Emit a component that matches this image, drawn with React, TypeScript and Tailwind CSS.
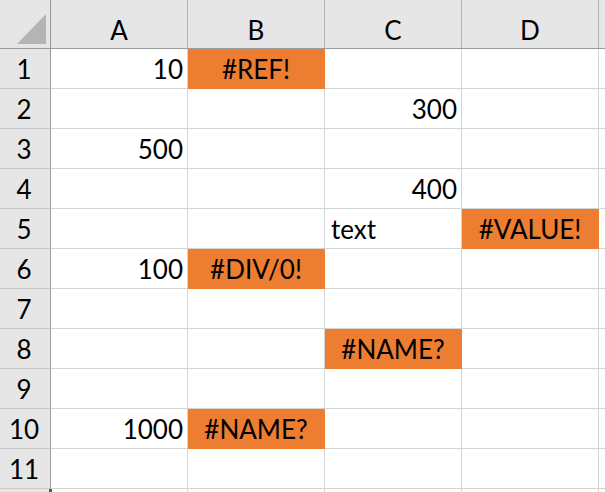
import React from "react";

type Cell = { v: string; align?: "r" | "l" | "c"; err?: boolean };

const rows: Cell[][] = [
  [{ v: "10", align: "r" }, { v: "#REF!", err: true }, { v: "" }, { v: "" }],
  [{ v: "" }, { v: "" }, { v: "300", align: "r" }, { v: "" }],
  [{ v: "500", align: "r" }, { v: "" }, { v: "" }, { v: "" }],
  [{ v: "" }, { v: "" }, { v: "400", align: "r" }, { v: "" }],
  [{ v: "" }, { v: "" }, { v: "text", align: "l" }, { v: "#VALUE!", err: true }],
  [{ v: "100", align: "r" }, { v: "#DIV/0!", err: true }, { v: "" }, { v: "" }],
  [{ v: "" }, { v: "" }, { v: "" }, { v: "" }],
  [{ v: "" }, { v: "" }, { v: "#NAME?", err: true }, { v: "" }],
  [{ v: "" }, { v: "" }, { v: "" }, { v: "" }],
  [{ v: "1000", align: "r" }, { v: "#NAME?", err: true }, { v: "" }, { v: "" }],
  [{ v: "" }, { v: "" }, { v: "" }, { v: "" }],
  [{ v: "" }, { v: "" }, { v: "" }, { v: "" }],
];

export default function App() {
  return (
    <div
      className="w-[605px] h-[492px] overflow-hidden bg-white text-black text-[26px] leading-none"
      style={{ fontFamily: "Lato, 'Open Sans', sans-serif" }}
    >
      {/* header row */}
      <div className="flex h-[49px] bg-[#e6e6e6] border-b border-[#9b9b9b] box-border">
        <div className="w-[51px] shrink-0 border-r border-[#9b9b9b] relative">
          <svg className="absolute left-0 top-0" width="50" height="48" viewBox="0 0 50 48">
            <polygon points="17,44 46,44 46,14" fill="#b4b4b4" />
          </svg>
        </div>
        {["A", "B", "C", "D"].map((c) => (
          <div
            key={c}
            className="w-[137px] shrink-0 border-r border-[#b5b5b5] flex items-center justify-center pt-[12px]"
          >
            {c}
          </div>
        ))}
        <div className="flex-1" />
      </div>
      {rows.map((r, i) => (
        <div key={i} className="flex h-[40px]">
          <div className="w-[51px] shrink-0 bg-[#e6e6e6] border-r border-[#9b9b9b] border-b border-b-[#c8c8c8] flex items-center justify-center pr-[2px] relative">
            {i < 11 ? i + 1 : ""}
            {i === 11 && (
              <div className="absolute right-[-2px] top-0 w-[3px] h-[3px] bg-[#217346]" />
            )}
          </div>
          {r.map((c, j) => (
            <div
              key={j}
              className={
                "w-[137px] shrink-0 border-r border-b flex items-center " +
                (c.err
                  ? "bg-[#ed7d31] border-[#ed7d31] justify-center"
                  : "border-[#d4d4d4] " +
                    (c.align === "r"
                      ? "justify-end pr-[4px]"
                      : c.align === "l"
                      ? "justify-start pl-[6px]"
                      : "justify-center"))
              }
            >
              {c.v}
            </div>
          ))}
          <div className="flex-1 border-b border-[#d4d4d4]" />
        </div>
      ))}
    </div>
  );
}
